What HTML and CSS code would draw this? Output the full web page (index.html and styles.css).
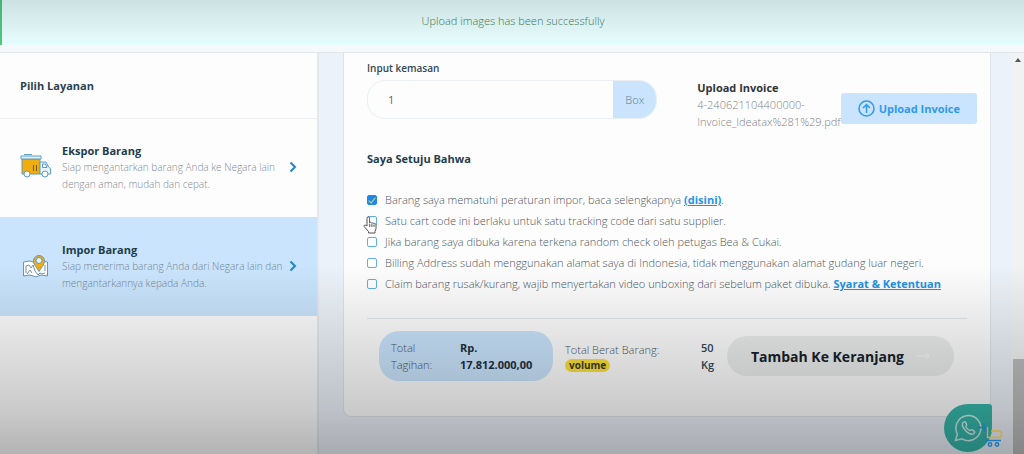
FILE: index.html
```html
<!DOCTYPE html>
<html lang="id">
<head>
<meta charset="utf-8">
<meta name="viewport" content="width=device-width, initial-scale=1">
<title>Impor Barang</title>
<link rel="stylesheet" href="styles.css">
</head>
<body>
<div class="page">
  <div class="toast" role="status">Upload images has been successfully</div>
  <div class="topbar"></div>
  <div class="layout">
    <aside class="sidebar">
      <h2 class="sidebar-title">Pilih Layanan</h2>
      <nav>
        <a class="service" href="#ekspor">
          <svg class="service-icon" viewBox="0 0 32 26" fill="none" stroke="#5d9cc4" stroke-width="1">
            <path d="M2 5h18v15H2z" fill="#f0ad10"/>
            <path d="M1 2h20v3H1z" fill="#e4f2fa"/>
            <path d="M4 .500h8"/>
            <path d="M20 8h6l2.500 5 2 1.500V20H20z" fill="#e8f4fb"/>
            <path d="M22.500 10h3l1.500 3.500h-4.500z" fill="#fff"/>
            <path d="M13.500 11v6M16.500 11v6" stroke="#6b5520"/>
            <circle cx="7" cy="20" r="3" fill="#fff"/>
            <circle cx="25" cy="20" r="3" fill="#fff"/>
          </svg>
          <span class="service-text">
            <strong class="service-name">Ekspor Barang</strong>
            <span class="service-desc">Siap mengantarkan barang Anda ke Negara lain dengan aman, mudah dan cepat.</span>
          </span>
          <svg class="chevron" viewBox="0 0 8 12"><path d="M1.500 1.500 6 6l-4.500 4.500"/></svg>
        </a>
        <a class="service service-active" href="#impor" aria-current="page">
          <svg class="service-icon" viewBox="0 0 32 26" fill="none" stroke="#6f95aa" stroke-width="1">
            <path d="M3.500 9 10 8l6 2 5-2 6.500 1v14l-6.500-1-5 2-6-2-6.500 1z" fill="#fff"/>
            <path d="M6 20v-7l3-1 2 3 2-3 2 6 3 4 2-2 2 1 3-1M7 21l3-4 2 3M25 12v6"/>
            <path d="M19 18.500c-2-4-5.500-6.500-5.500-10.500a5.500 5.500 0 0 1 11 0c0 4-3.500 6.500-5.500 10.500z" fill="#f0ad10"/>
            <circle cx="19" cy="7.500" r="3" fill="#e4f2fa"/>
          </svg>
          <span class="service-text">
            <strong class="service-name">Impor Barang</strong>
            <span class="service-desc">Siap menerima barang Anda dari Negara lain dan mengantarkannya kepada Anda.</span>
          </span>
          <svg class="chevron" viewBox="0 0 8 12"><path d="M1.500 1.500 6 6l-4.500 4.500"/></svg>
        </a>
      </nav>
    </aside>

    <main class="content">
      <form class="card">
        <div class="package-row">
          <div class="field">
            <label class="field-label" for="kemasan">Input kemasan</label>
            <div class="input-group">
              <input class="input" id="kemasan" type="text" value="1">
              <span class="input-unit">Box</span>
            </div>
          </div>
          <div class="invoice">
            <div class="invoice-file">
              <strong class="invoice-title">Upload Invoice</strong>
              <span>4-240621104400000-<br>Invoice_Ideatax%281%29.pdf</span>
            </div>
            <button class="upload-button" type="button">
              <svg class="upload-icon" viewBox="0 0 17 17"><circle cx="8.500" cy="8.500" r="7.500"/><path d="M8.500 13V4.500M5 8l3.500-3.500L12 8"/></svg>
              Upload Invoice
            </button>
          </div>
        </div>

        <fieldset class="terms">
          <legend class="terms-title">Saya Setuju Bahwa</legend>
          <div class="term"><input class="check" type="checkbox" id="t1" checked><label for="t1">Barang saya mematuhi peraturan impor, baca selengkapnya <a href="#disini">(disini)</a>.</label></div>
          <div class="term"><input class="check" type="checkbox" id="t2"><label for="t2">Satu cart code ini berlaku untuk satu tracking code dari satu supplier.</label>
            <svg class="pointer" viewBox="0 0 14 18"><path d="M4 10V2.200a1.300 1.300 0 0 1 2.600 0V7a1.200 1.200 0 0 1 2.200.4 1.200 1.200 0 0 1 2.200.5 1.200 1.200 0 0 1 2 .9v3.700c0 1-.8 2-1 3V17H5.500v-1.500L1.200 10.600C.5 9.500 1.800 8.500 2.800 9.300z"/><path d="M6.700 8v3M8.900 8v3M11 8.500V11"/></svg>
          </div>
          <div class="term"><input class="check" type="checkbox" id="t3"><label for="t3">Jika barang saya dibuka karena terkena random check oleh petugas Bea &amp; Cukai.</label></div>
          <div class="term"><input class="check" type="checkbox" id="t4"><label for="t4">Billing Address sudah menggunakan alamat saya di Indonesia, tidak menggunakan alamat gudang luar negeri.</label></div>
          <div class="term"><input class="check" type="checkbox" id="t5"><label for="t5">Claim barang rusak/kurang, wajib menyertakan video unboxing dari sebelum paket dibuka. <a href="#syarat">Syarat &amp; Ketentuan</a></label></div>
        </fieldset>

        <div class="summary">
          <div class="bill">
            <span class="bill-label">Total Tagihan:</span>
            <strong class="bill-value">Rp. 17.812.000,00</strong>
          </div>
          <div class="weight">
            <span>Total Berat Barang:</span>
            <span class="badge">volume</span>
          </div>
          <strong class="weight-value">50 Kg</strong>
          <button class="cart-button" type="submit">
            Tambah Ke Keranjang
            <svg class="arrow" viewBox="0 0 14 8"><path d="M0 4h13M10 1l3 3-3 3"/></svg>
          </button>
        </div>
      </form>
    </main>
    <div class="scrollbar" aria-hidden="true"><span class="scroll-up"></span><span class="scroll-thumb"></span></div>
  </div>
  <a class="whatsapp" href="#whatsapp" aria-label="WhatsApp">
    <svg class="whatsapp-icon" viewBox="0 0 28 28"><path d="M1.500 26.500 3.400 20A12.500 12.500 0 1 1 8 24.800z"/><path d="M9.500 8c-2 1.500-1.500 4.500 1.500 8s7 5.500 9 3.500c1-1 1-2-.2-2.700l-2-1c-1-.4-1.600.8-2.300.6-1.500-.6-3-2.200-3.600-3.600-.2-.7 1-1.200.7-2.200l-.8-2c-.5-1-1.500-1.200-2.300-.6z"/></svg>
  </a>
  <svg class="cart-logo" viewBox="0 0 26 26" fill="none" stroke-width="1.500"><path d="M0 5.500h9M7 1v8" stroke="#1c78b8"/><path d="M9.500 5v13.500H24" stroke="#1c78b8"/><path d="M10.500 5v10.500H21c2.500 0 3.500-1.500 3.500-3.500S23 9 21 9h-7" stroke="#d0a92c"/><circle cx="13" cy="22.500" r="1.700" stroke="#2277bb"/><circle cx="20" cy="22.500" r="1.700" stroke="#2277bb"/></svg>
</div>
</body>
</html>
```
FILE: styles.css
```css
* { box-sizing: border-box; }

body {
  margin: 0;
  font-family: "Open Sans", "Noto Sans", sans-serif;
  font-size: 11px;
  font-weight: 300;
  line-height: 17px;
  color: #4c575e;
}

.page {
  position: relative;
  display: flex;
  flex-direction: column;
  min-height: 100vh;
  background: #ecf2f9;
}

/* soft shade along the top and bottom edges of the view */
.page::after {
  content: "";
  position: absolute;
  inset: 0;
  pointer-events: none;
  background:
    linear-gradient(rgba(0, 0, 0, 0.11), rgba(0, 0, 0, 0) 44px),
    linear-gradient(to top, rgba(0, 0, 0, 0.29), rgba(0, 0, 0, 0.2) 44px, rgba(0, 0, 0, 0.08) 134px, rgba(0, 0, 0, 0) 190px);
}

.toast {
  height: 45px;
  padding: 12px;
  border-left: 2px solid #4fc97f;
  background: #e6fdfd;
  color: #3f7c5a;
  text-align: center;
}

.topbar {
  height: 8px;
  background: #f6f9fb;
  border-bottom: 1px solid #e2e6ea;
}

.layout { display: flex; flex: 1; }

.sidebar {
  width: 319px;
  flex: none;
  background: #fdfdfe;
  border-right: 2px solid #e5e8ec;
}

.sidebar-title {
  margin: 0;
  padding: 24px 20px;
  font-size: 11px;
  font-weight: 700;
  color: #2b434f;
}

.service {
  display: flex;
  align-items: center;
  gap: 10px;
  height: 99px;
  padding: 0 20px 2px;
  border-top: 1px solid #eef1f4;
  color: #858b91;
  font-size: 10px;
  text-decoration: none;
}

.service-active { background: #c9e4fc; border-color: #c9e4fc; color: #768797; }
.service-icon { width: 32px; height: 26px; flex: none; }
.service-text { flex: 1; margin-right: -6px; }
.service-name { display: block; font-size: 11px; font-weight: 700; color: #1d3b4c; }
.service-desc { display: block; }

.chevron {
  width: 8px;
  height: 12px;
  fill: none;
  stroke: #1f86cc;
  stroke-width: 2;
}

.content { flex: 1; min-width: 0; padding: 0 21px 36px 24px; }

.card {
  background: #fdfdfe;
  border: 1px solid #dfe4ea;
  border-top: 0;
  border-radius: 0 0 8px 8px;
  padding: 7px 13px 35px 23px;
}

.package-row { display: flex; justify-content: space-between; gap: 40px; }
.field { flex: 1; }

.field-label {
  display: block;
  margin-bottom: 3px;
  font-size: 10px;
  font-weight: 600;
  color: #33454f;
}

.input-group {
  display: flex;
  height: 39px;
  border: 1px solid #e9eef3;
  border-radius: 18px;
  overflow: hidden;
}

.input {
  flex: 1;
  min-width: 0;
  border: 0;
  padding: 0 20px;
  background: transparent;
  font: inherit;
  font-weight: 400;
  color: #5b666d;
}

.input-unit {
  display: flex;
  align-items: center;
  justify-content: center;
  width: 43px;
  background: #c9e4fc;
  color: #5d7b94;
}

.invoice { display: flex; align-items: center; padding-top: 19px; }
.invoice-file { display: flex; flex-direction: column; color: #7d8286; }
.invoice-title { font-weight: 700; color: #2e3438; }

.upload-button {
  display: flex;
  align-items: center;
  gap: 4px;
  height: 31px;
  margin-top: 8px;
  padding: 0 17px;
  border: 0;
  border-radius: 3px;
  background: #c9e4fc;
  color: #2e9af0;
  font: inherit;
  font-weight: 700;
  white-space: nowrap;
}

.upload-icon { width: 17px; height: 17px; fill: none; stroke: currentColor; stroke-width: 1.500; }

.terms { min-width: 0; margin: 0; padding: 20px 0 0; border: 0; }
.terms-title { float: left; width: 100%; margin-bottom: 22px; padding: 0; font-weight: 700; color: #1f3d4c; }

.term {
  position: relative;
  display: flex;
  align-items: center;
  gap: 8px;
  clear: both;
  height: 21px;
  white-space: nowrap;
}

.term a { color: #2492e4; font-weight: 700; }

.check {
  appearance: none;
  flex: none;
  width: 10px;
  height: 10px;
  margin: 0;
  border: 1px solid #5eaeea;
  border-radius: 2px;
  background: #fff;
}

.check:checked {
  border-color: #1e88ee;
  background: #1e88ee;
}

.check:checked::after {
  content: "";
  display: block;
  width: 3px;
  height: 6px;
  margin: 0 auto;
  border: solid #d6e04c;
  border-width: 0 1px 1px 0;
  transform: rotate(40deg);
}

.pointer {
  position: absolute;
  left: -4px;
  top: 6px;
  width: 14px;
  height: 18px;
  fill: #fff;
  stroke: #555;
  stroke-width: 1;
}

.summary {
  display: flex;
  align-items: center;
  margin: 24px 10px 0 0;
  padding: 12px 13px 0 12px;
  border-top: 1px solid #e3e7eb;
}

.bill {
  display: flex;
  gap: 20px;
  padding: 8px 19px 8px 12px;
  border-radius: 20px;
  background: #c9e4fc;
}

.bill-label { width: 49px; }
.bill-value { width: 74px; font-weight: 700; color: #1b2f3c; }

.weight { flex: 1; padding-left: 12px; white-space: nowrap; }

.badge {
  display: table;
  margin-top: 1px;
  padding: 0 4px;
  border-radius: 7px;
  background: #fbe038;
  font-size: 10px;
  line-height: 13px;
  font-weight: 700;
  color: #3e3a20;
}

.weight-value { width: 26px; font-weight: 600; color: #2f4653; }

.cart-button {
  display: flex;
  align-items: center;
  gap: 12px;
  height: 40px;
  padding: 0 24px;
  border: 0;
  border-radius: 20px;
  background: #ebecec;
  color: #16212a;
  font: inherit;
  font-size: 14px;
  font-weight: 700;
  white-space: nowrap;
}

.arrow { width: 14px; height: 8px; fill: none; stroke: #fafafa; stroke-width: 1; }

.scrollbar {
  position: relative;
  display: flex;
  flex-direction: column;
  justify-content: space-between;
  align-items: center;
  width: 12px;
  padding-top: 5px;
  background: #f1f2f3;
}

.scroll-up {
  border: 3px solid transparent;
  border-top: 0;
  border-bottom: 4px solid #555;
}

.scroll-thumb { width: 11px; height: 24%; background: #bcbcbe; }

.whatsapp {
  position: absolute;
  right: 32px;
  bottom: 2px;
  display: flex;
  align-items: center;
  justify-content: center;
  width: 48px;
  height: 48px;
  border-radius: 24px 3px 24px 24px;
  background: #36b7aa;
}

.whatsapp-icon { width: 28px; height: 28px; fill: none; stroke: #cdeeea; stroke-width: 1.500; }
.cart-logo { position: absolute; right: 21px; bottom: 6px; width: 26px; height: 26px; z-index: 1; }
```
